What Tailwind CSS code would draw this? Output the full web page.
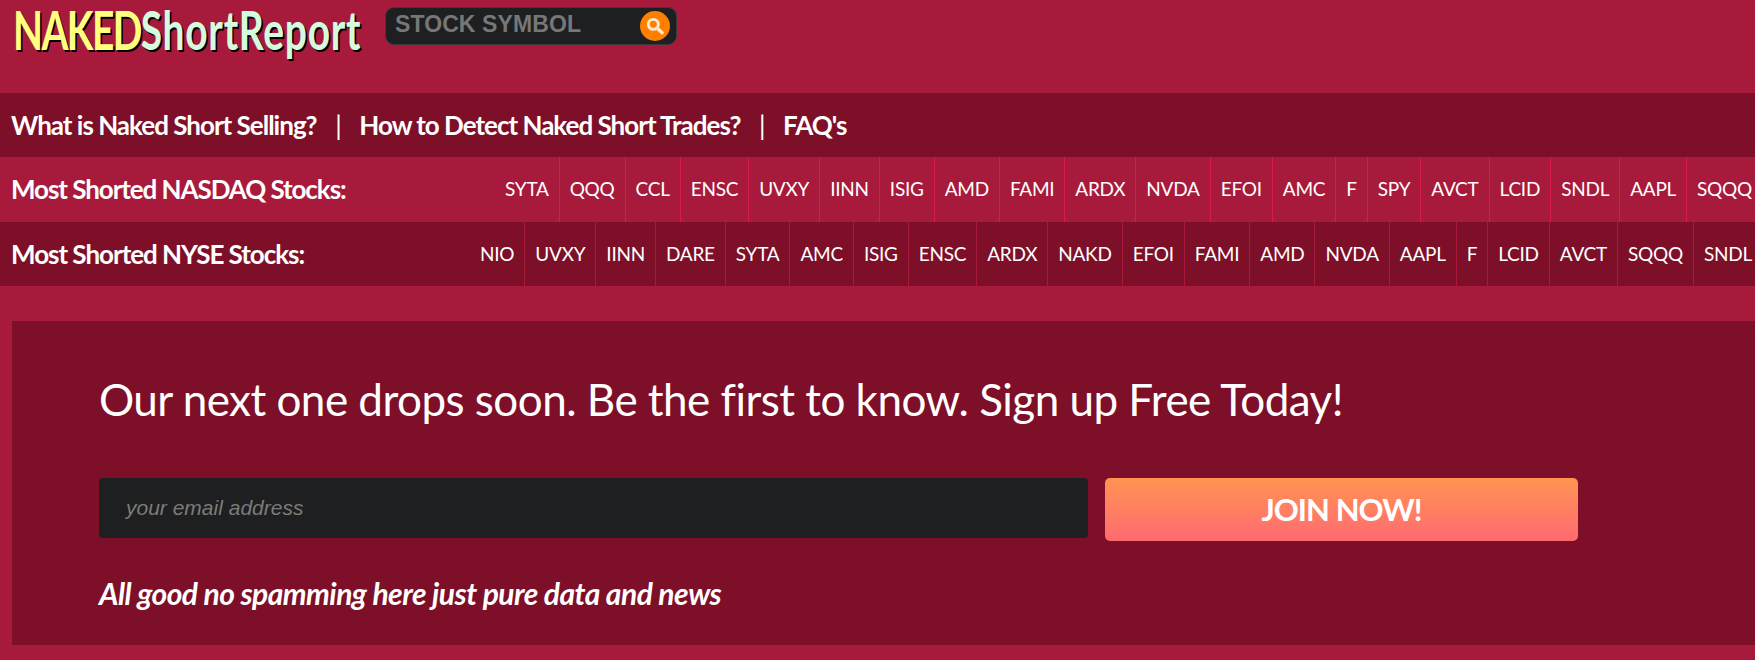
<!DOCTYPE html>
<html lang="en">
<head>
<meta charset="utf-8">
<title>Naked Short Report</title>
<script src="https://cdn.jsdelivr.net/npm/@tailwindcss/browser@4"></script>
</head>
<body class="h-[660px] overflow-hidden bg-[#a81a3c] font-['Lato',sans-serif] text-white">
<header class="flex h-[93px] items-start pl-[13px]">
  <div class="w-[372px]">
    <div class="w-max origin-top-left scale-x-[0.735] text-[53px] leading-[60px] font-bold [text-shadow:2px_2px_0_#000]">
      <span class="tracking-[-2.2px] text-[#ffff80]">NAKED</span><span class="tracking-[1px] text-[#d5fbdf]">ShortReport</span>
    </div>
  </div>
  <div class="mt-[7px] flex h-[38px] w-[292px] items-center justify-between rounded-[9px] border border-[#3a3a3a] bg-[#1e1f21] pr-[6px] pl-[9px]">
    <span class="mb-[3px] font-['Liberation_Sans',sans-serif] text-[23px] leading-none font-bold tracking-[0.1px] text-[#777]">STOCK SYMBOL</span>
    <span class="flex h-[30px] w-[30px] items-center justify-center rounded-full bg-[#ff8000]">
      <svg width="20" height="20" viewBox="0 0 18 18" fill="none" stroke="#ffe9d6" stroke-linecap="round"><circle cx="7.5" cy="7.5" r="4.5" stroke-width="2.6"/><path d="M11 11l4.5 4" stroke-width="3"/></svg>
    </span>
  </div>
</header>
<nav class="flex h-[64px] items-center bg-[#7d0f28] pl-[11px] text-[26px] font-bold tracking-[-1px]">
  <a>What is Naked Short Selling?</a><span class="px-[18.6px] font-normal">|</span><a>How to Detect Naked Short Trades?</a><span class="px-[18.6px] font-normal">|</span><a>FAQ's</a>
</nav>
<section class="flex h-[65px] items-stretch justify-between overflow-hidden pl-[11px]">
  <h2 class="self-center text-[26px] font-bold tracking-[-1.07px] whitespace-nowrap">Most Shorted NASDAQ Stocks:</h2>
  <ul class="flex items-stretch text-[19px] tracking-[-0.25px] whitespace-nowrap [&>li]:flex [&>li]:items-center [&>li]:border-r [&>li]:border-[#d81b48] [&>li]:px-[10px] [&>li:last-child]:border-r-0 [&>li:last-child]:pr-[3px]">
    <li>SYTA</li><li>QQQ</li><li>CCL</li><li>ENSC</li><li>UVXY</li><li>IINN</li><li>ISIG</li><li>AMD</li><li>FAMI</li><li>ARDX</li><li>NVDA</li><li>EFOI</li><li>AMC</li><li>F</li><li>SPY</li><li>AVCT</li><li>LCID</li><li>SNDL</li><li>AAPL</li><li>SQQQ</li>
  </ul>
</section>
<section class="flex h-[64px] items-stretch justify-between overflow-hidden bg-[#7d0f28] pl-[11px]">
  <h2 class="self-center text-[26px] font-bold tracking-[-1.03px] whitespace-nowrap">Most Shorted NYSE Stocks:</h2>
  <ul class="flex items-stretch text-[19px] tracking-[-0.25px] whitespace-nowrap [&>li]:flex [&>li]:items-center [&>li]:border-r [&>li]:border-[#a81a3c] [&>li]:px-[10px] [&>li:last-child]:border-r-0 [&>li:last-child]:pr-[3px]">
    <li>NIO</li><li>UVXY</li><li>IINN</li><li>DARE</li><li>SYTA</li><li>AMC</li><li>ISIG</li><li>ENSC</li><li>ARDX</li><li>NAKD</li><li>EFOI</li><li>FAMI</li><li>AMD</li><li>NVDA</li><li>AAPL</li><li>F</li><li>LCID</li><li>AVCT</li><li>SQQQ</li><li>SNDL</li>
  </ul>
</section>
<main class="mt-[35px] ml-[12px] h-[324px] bg-[#7d0f28] pt-[51px] pl-[87px]">
  <h1 class="text-[44px] leading-[54px] font-normal tracking-[-0.53px]">Our next one drops soon. Be the first to know. Sign up Free Today!</h1>
  <form class="mt-[52px] flex items-start gap-[17px]">
    <div class="flex h-[60px] w-[989px] items-center rounded-[4px] bg-[#1e1f21] pl-[27px] font-['Liberation_Sans',sans-serif] text-[21px] text-[#7c7c78] italic">your email address</div>
    <button class="h-[63px] w-[473px] rounded-[5px] bg-gradient-to-b from-[#ff9350] to-[#ff6a70] pb-[1px] text-[31px] font-bold tracking-[-0.95px] text-white">JOIN NOW!</button>
  </form>
  <p class="mt-[34px] text-[30px] leading-[36px] font-bold tracking-[-0.53px] italic">All good no spamming here just pure data and news</p>
</main>
</body>
</html>
